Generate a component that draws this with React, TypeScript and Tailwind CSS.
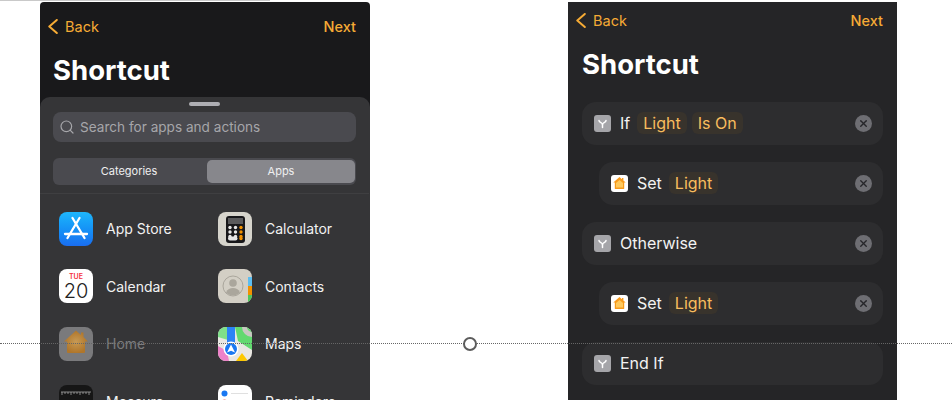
import type { ReactNode } from "react"
import { Search, X } from "lucide-react"

const font = "font-['Inter','Noto_Sans',sans-serif]"

function NavBar() {
  return (
    <div className="flex items-center justify-between text-[14.5px] text-[#f6ab35]">
      <div className="flex items-center gap-[7px]">
        <svg viewBox="0 0 10 15" className="h-[15px] w-[10px]" fill="none" stroke="currentColor" strokeWidth="2" strokeLinecap="round" strokeLinejoin="round">
          <path d="M8.8 1 1.3 7.5l7.5 6.5" />
        </svg>
        <span>Back</span>
      </div>
      <span className="font-medium">Next</span>
    </div>
  )
}

function AppStoreIcon() {
  return (
    <div className="size-[34px] rounded-[8px] bg-gradient-to-b from-[#1fb6fb] to-[#1a6df0]">
      <svg viewBox="0 0 34 34" className="size-full" fill="none" stroke="#fff" strokeWidth="2.3" strokeLinecap="round">
        <path d="M20.5 6 8.5 26" />
        <path d="M13.5 6 25.5 26" />
        <path d="M6 22h22" />
      </svg>
    </div>
  )
}

function CalculatorIcon() {
  const keys = [0, 1, 2, 3, 4, 5, 6, 7, 8]
  return (
    <div className="size-[34px] rounded-[8px] bg-[#d6d4cc]">
      <svg viewBox="0 0 34 34" className="size-full">
        <rect x="8" y="4" width="19" height="27" rx="3" fill="#17171a" />
        <rect x="10" y="6" width="15" height="6" fill="#5a5a5c" />
        {keys.map((k) => (
          <circle key={k} cx={12 + (k % 3) * 5.5} cy={15.5 + Math.floor(k / 3) * 4.5} r="1.7" fill={k % 3 === 2 ? "#f29100" : "#e6e6e6"} />
        ))}
        <rect x="10" y="24.5" width="9.5" height="4" rx="2" fill="#e6e6e6" />
        <circle cx="23" cy="26.5" r="1.7" fill="#f29100" />
      </svg>
    </div>
  )
}

function CalendarIcon() {
  return (
    <div className="size-[34px] rounded-[8px] bg-white flex flex-col items-center">
      <span className="text-[7px] leading-[7px] mt-[3.5px] font-semibold text-[#f5333f]">TUE</span>
      <span className="text-[20px] leading-[22px] text-[#222] font-light">20</span>
    </div>
  )
}

function ContactsIcon() {
  return (
    <div className="size-[34px] rounded-[8px] overflow-hidden bg-[#d3cfc5]">
      <svg viewBox="0 0 34 34" className="size-full">
        <rect x="30" y="8" width="4" height="9" fill="#5cbdf0" />
        <rect x="30" y="17" width="4" height="9" fill="#f29100" />
        <rect x="30" y="26" width="4" height="8" fill="#4fc759" />
        <circle cx="15" cy="17" r="10" fill="none" stroke="#aaa69c" strokeWidth="1" />
        <circle cx="15" cy="14" r="3.8" fill="#aaa69c" />
        <path d="M8 23.5c1.5-3.5 4-4.5 7-4.5s5.5 1 7 4.5c-2 2-4.500 3-7 3s-5-1-7-3z" fill="#aaa69c" />
      </svg>
    </div>
  )
}

function HomeIcon() {
  return (
    <div className="size-[34px] rounded-[8px] bg-[#7a7a7c]">
      <svg viewBox="0 0 34 34" className="size-full">
        <defs>
          <radialGradient id="homeglow">
            <stop offset="0%" stopColor="#c79a55" />
            <stop offset="100%" stopColor="#b0762a" />
          </radialGradient>
        </defs>
        <path d="M17 3.5 22 8V5.5h2.5V10L29 14.5h-3V25a1 1 0 0 1-1 1H9a1 1 0 0 1-1-1V14.5H5z" fill="url(#homeglow)" />
      </svg>
    </div>
  )
}

function MapsIcon() {
  return (
    <div className="size-[34px] rounded-[8px] overflow-hidden bg-[#e9e7e2]">
      <svg viewBox="0 0 34 34" className="size-full">
        <path d="M0 0h10v13L0 10z" fill="#7fe08a" />
        <path d="M17 0h17v23L20 14z" fill="#62d96f" />
        <path d="M24 0a10 10 0 0 0 10 10V5a5 5 0 0 1-5-5z" fill="#c9c7c2" />
        <path d="M9 0h8v18H9z" fill="#2b83f6" />
        <path d="M0 19l9 5 2 10H0z" fill="#ee82c9" />
        <path d="M18 34l6-8 6 8z" fill="#fdc800" />
        <circle cx="13" cy="22" r="7.5" fill="#fff" />
        <circle cx="13" cy="22" r="6" fill="#1a78f2" />
        <path d="M13 17.5 17 25.5 13 23.8 9 25.5z" fill="#fff" />
      </svg>
    </div>
  )
}

function MeasureIcon() {
  return (
    <div className="size-[34px] rounded-[8px] bg-[#161616]">
      <svg viewBox="0 0 34 34" className="size-full" stroke="#b5b5b5" strokeWidth="0.7" fill="none">
        <path d="M2 7h30" />
        <path d="M3 7v3M6 7v2M9 7v2M12 7v3M15 7v2M18 7v2M21 7v3M24 7v2M27 7v2M30 7v3" />
      </svg>
    </div>
  )
}

function RemindersIcon() {
  return (
    <div className="size-[34px] rounded-[8px] bg-white">
      <svg viewBox="0 0 34 34" className="size-full">
        <circle cx="6.5" cy="8.5" r="3" fill="#1a78f2" />
        <circle cx="6.5" cy="17.5" r="3" fill="#f0645c" />
        <path d="M13 8.5h17M13 17.5h17" stroke="#d8d8d8" strokeWidth="0.8" />
      </svg>
    </div>
  )
}

function AppRow({ icon, label, dim }: { icon: ReactNode; label: string; dim?: boolean }) {
  return (
    <div className={`flex items-center gap-[13px] h-[34px] text-[14px] ${dim ? "text-[#7c7c7e]" : "text-[#f2f2f2]"}`}>
      {icon}
      <span>{label}</span>
    </div>
  )
}

function IfIcon() {
  return (
    <div className="size-[17px] shrink-0 rounded-[3px] bg-[#a5a5a9]">
      <svg viewBox="0 0 17 17" className="size-full" fill="none" stroke="#fff" strokeWidth="1.5" strokeLinecap="round" strokeLinejoin="round">
        <path d="M5 5.5c0 2.3 3.5 2 3.5 4V12.5" />
        <path d="M12 5.5c0 2.3-3.5 2-3.5 4" />
      </svg>
    </div>
  )
}

function SmallHomeIcon() {
  return (
    <div className="size-[17px] shrink-0 rounded-[3px] bg-white">
      <svg viewBox="0 0 17 17" className="size-full">
        <path d="M8.5 2 11 4.2V3h1.4v2.4l2.3 2.2H13.2v6a.5.5 0 0 1-.5.5H4.300a.5.5 0 0 1-.5-.5v-6H2.300z" fill="#f79a1c" />
        <path d="M8.500 5 12 8v4.500H5V8z" fill="#ffc95c" />
      </svg>
    </div>
  )
}

function Token({ children }: { children: ReactNode }) {
  return <span className="rounded-[6px] bg-[#38332c] px-[6px] h-[22px] flex items-center text-[#f8bd5e]">{children}</span>
}

function ActionRow({ icon, nested, children, removable = true }: { icon: ReactNode; nested?: boolean; children: ReactNode; removable?: boolean }) {
  return (
    <div className={`flex items-center h-[43px] rounded-[14px] bg-[#2d2d2f] pl-[12px] pr-[11px] text-[16px] text-[#f2f2f2] ${nested ? "ml-[17px]" : ""}`}>
      {icon}
      <div className="ml-[9px] flex items-center gap-[5px]">{children}</div>
      {removable && (
        <div className="ml-auto size-[17px] rounded-full bg-[#6e6e73] flex items-center justify-center">
          <X className="size-[11px] text-[#26262a]" strokeWidth={3} />
        </div>
      )}
    </div>
  )
}

export default function App() {
  return (
    <div className={`relative w-[952px] h-[400px] overflow-hidden bg-white ${font}`}>
      <div className="h-[1px] w-[270px] bg-[#c9c9c9]" />
      <div className="flex items-start mt-[1px]">
        {/* left phone */}
        <div className="ml-[40px] w-[330px] h-[398px] overflow-hidden rounded-t-[4px] bg-[#19191b]">
          <div className="pl-[8px] pr-[14px] pt-[14px]">
            <NavBar />
          </div>
          <h1 className="pl-[13px] mt-[13px] text-[27.5px] leading-[38px] font-bold text-white">Shortcut</h1>
          <div className="mt-[8px] h-[400px] rounded-t-[10px] bg-[#353537] pl-[13px] pr-[14px]">
            <div className="pt-[5px] flex justify-center">
              <div className="h-[4px] w-[31px] rounded-full bg-[#aeaeb3]" />
            </div>
            <div className="mt-[6px] flex h-[30px] items-center gap-[5px] rounded-[8px] bg-[#4a4a4f] pl-[6px] text-[13.6px] text-[#a6a6aa]">
              <Search className="size-[16px]" strokeWidth={1.8} />
              <span>Search for apps and actions</span>
            </div>
            <div className="mt-[16px] grid h-[27px] grid-cols-[1fr_148px] rounded-[6px] bg-[#4a4a4f] py-[2px] pl-[2px] pr-[1px] text-[11px] text-[#efeff0]">
              <div className="flex items-center justify-center pr-[4px]">Categories</div>
              <div className="flex items-center justify-center rounded-[5px] bg-[#87878c]">Apps</div>
            </div>
            <div className="-mx-[13px] mt-[8px] border-t border-[#3f3f41]" />
            <div className="mt-[18px] grid grid-cols-[159px_1fr] gap-y-[23.6px] pl-[6px]">
              <AppRow icon={<AppStoreIcon />} label="App Store" />
              <AppRow icon={<CalculatorIcon />} label="Calculator" />
              <AppRow icon={<CalendarIcon />} label="Calendar" />
              <AppRow icon={<ContactsIcon />} label="Contacts" />
              <AppRow icon={<HomeIcon />} label="Home" dim />
              <AppRow icon={<MapsIcon />} label="Maps" />
              <AppRow icon={<MeasureIcon />} label="Measure" />
              <AppRow icon={<RemindersIcon />} label="Reminders" />
            </div>
          </div>
        </div>

        {/* right phone */}
        <div className="ml-[198px] w-[329px] h-[398px] overflow-hidden bg-[#252527] px-[14px]">
          <div className="-ml-[6px] pt-[8px]">
            <NavBar />
          </div>
          <h1 className="mt-[13px] text-[27.5px] leading-[38px] font-bold text-white">Shortcut</h1>
          <div className="mt-[19px] flex flex-col gap-[17px]">
            <ActionRow icon={<IfIcon />}>
              <span className="mr-[2px]">If</span>
              <Token>Light</Token>
              <Token>Is On</Token>
            </ActionRow>
            <ActionRow icon={<SmallHomeIcon />} nested>
              <span className="mr-[2px]">Set</span>
              <Token>Light</Token>
            </ActionRow>
            <ActionRow icon={<IfIcon />}>
              <span>Otherwise</span>
            </ActionRow>
            <ActionRow icon={<SmallHomeIcon />} nested>
              <span className="mr-[2px]">Set</span>
              <Token>Light</Token>
            </ActionRow>
            <ActionRow icon={<IfIcon />} removable={false}>
              <span>End If</span>
            </ActionRow>
          </div>
        </div>
      </div>

      {/* connector across both phones */}
      <div className="absolute left-0 right-0 top-[343px] border-t border-dotted border-[#666]" />
      <div className="absolute left-[463px] top-[337px] size-[14px] rounded-full border-[2.5px] border-[#5c5c5c] bg-white" />
    </div>
  )
}
